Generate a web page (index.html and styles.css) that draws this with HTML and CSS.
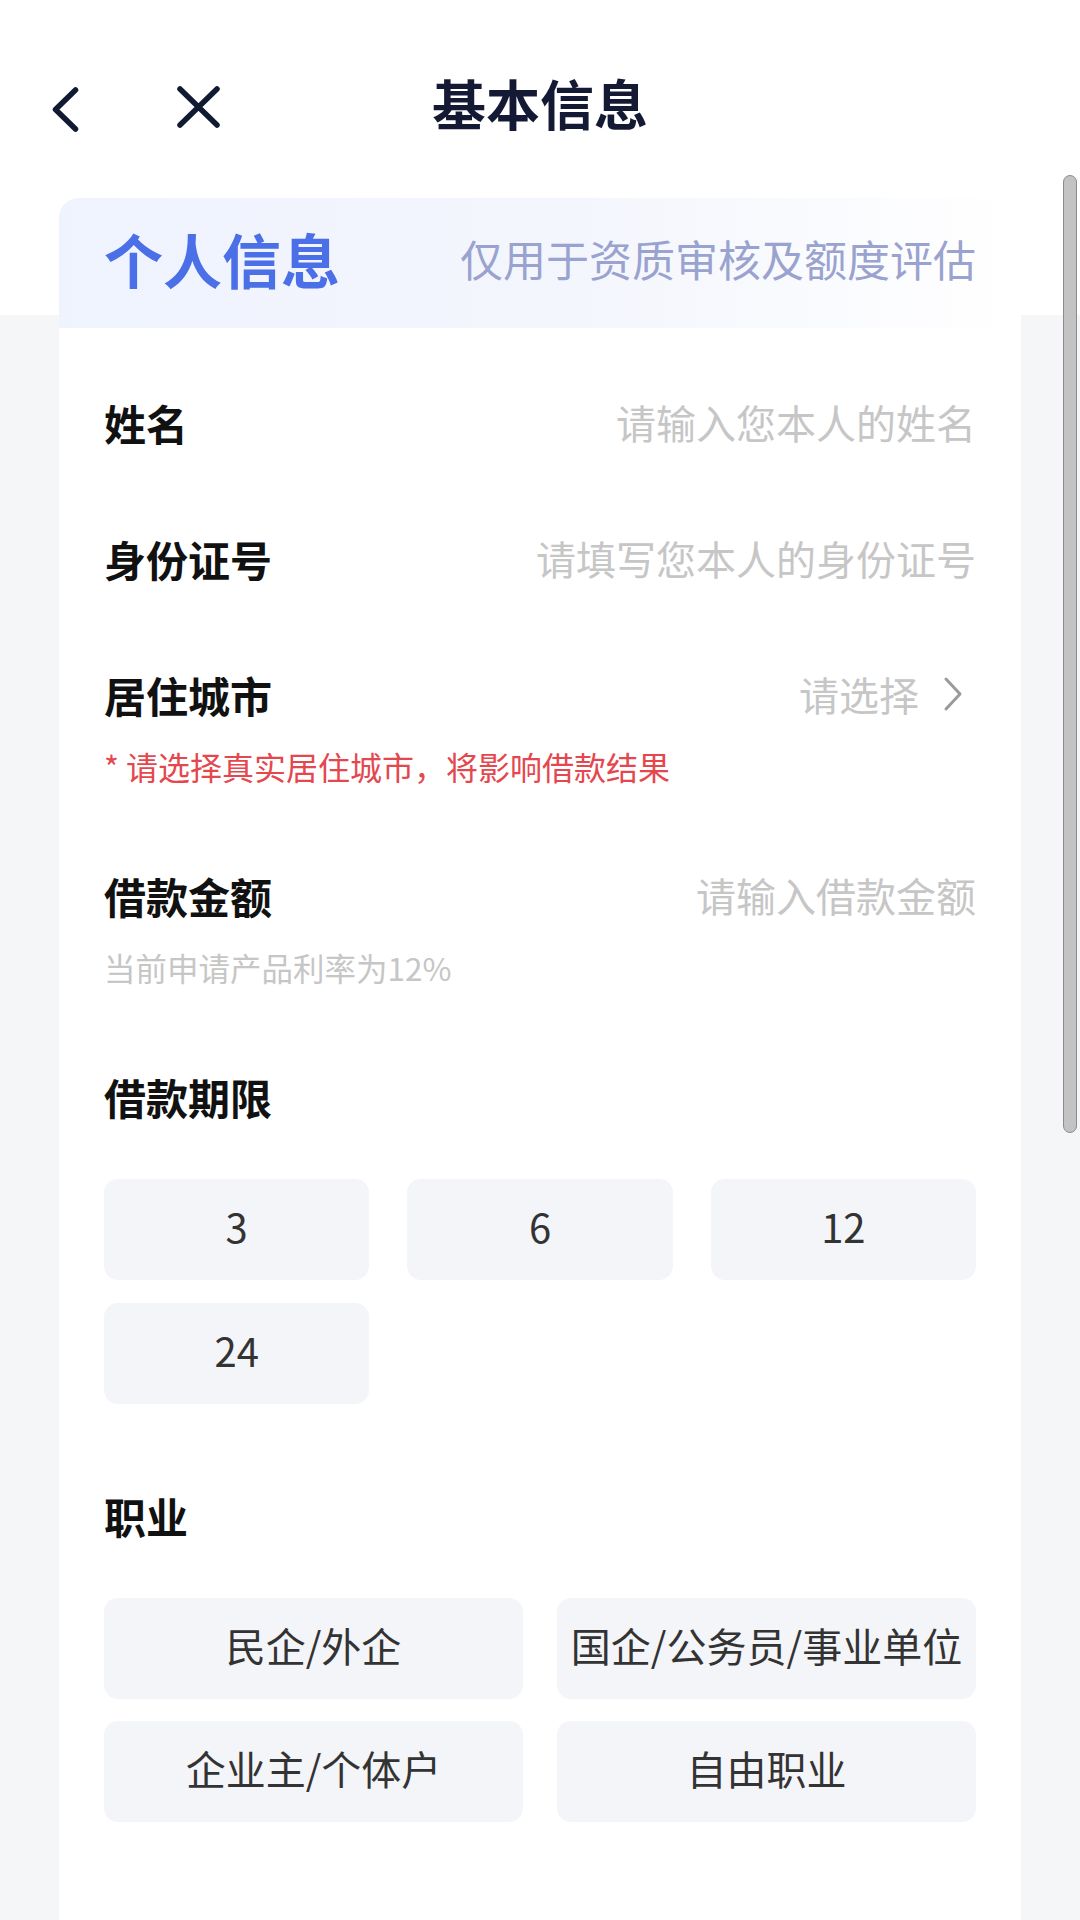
FILE: index.html
```html
<!DOCTYPE html>
<html lang="zh-CN">
<head>
    <meta charset="UTF-8">
    <meta name="viewport" content="width=device-width, initial-scale=1.0">
    <title>基本信息</title>
    <link rel="stylesheet" href="styles.css">
</head>
<body>
<div class="page">

    <header class="nav">
        <div class="nav-left">
            <svg class="icon-back" width="40" height="56" viewBox="0 0 40 56">
                <path d="M30.5 11 L10.5 30.5 L30.5 50" />
            </svg>
            <svg class="icon-close" width="56" height="56" viewBox="0 0 56 56">
                <path d="M10 10 L47 46 M47 10 L10 46" />
            </svg>
        </div>
        <h1 class="nav-title">基本信息</h1>
        <div></div>
    </header>

    <section class="card">
        <div class="card-head">
            <h2>个人信息</h2>
            <span class="card-tip">仅用于资质审核及额度评估</span>
        </div>

        <div class="card-body">
            <div class="field">
                <span class="label">姓名</span>
                <span class="placeholder">请输入您本人的姓名</span>
            </div>

            <div class="field">
                <span class="label">身份证号</span>
                <span class="placeholder">请填写您本人的身份证号</span>
            </div>

            <div class="field field-select">
                <span class="label">居住城市</span>
                <span class="placeholder">请选择
                    <svg class="icon-more" width="24" height="38" viewBox="0 0 24 38">
                        <path d="M5 4 L19 19 L5 34" />
                    </svg>
                </span>
            </div>
            <p class="note note-warn">* 请选择真实居住城市，将影响借款结果</p>

            <div class="field">
                <span class="label">借款金额</span>
                <span class="placeholder">请输入借款金额</span>
            </div>
            <p class="note">当前申请产品利率为12%</p>

            <div class="field">
                <span class="label">借款期限</span>
            </div>
            <div class="options options-3">
                <div class="option">3</div>
                <div class="option">6</div>
                <div class="option">12</div>
                <div class="option">24</div>
            </div>

            <div class="field">
                <span class="label">职业</span>
            </div>
            <div class="options options-2">
                <div class="option">民企/外企</div>
                <div class="option">国企/公务员/事业单位</div>
                <div class="option">企业主/个体户</div>
                <div class="option">自由职业</div>
            </div>
        </div>
    </section>

    <div class="scrollbar"></div>
</div>
</body>
</html>
```

FILE: styles.css
```css
* {
    box-sizing: border-box;
}

body {
    margin: 0;
    font-family: "Noto Sans CJK SC", "Noto Sans", sans-serif;
    color: #111;
}

.page {
    position: relative;
    width: 1080px;
    height: 1920px;
    overflow: hidden;
    background: linear-gradient(to bottom, #fff 315px, #f5f6f8 315px);
}

/* top navigation */
.nav {
    display: grid;
    grid-template-columns: 1fr auto 1fr;
    align-items: center;
    height: 60px;
    margin-top: 73px;
}

.nav-left {
    display: flex;
    align-items: center;
    gap: 85px;
    padding-left: 45px;
}

.nav-left svg path {
    fill: none;
    stroke: #111a33;
    stroke-width: 5.5;
    stroke-linecap: round;
    stroke-linejoin: round;
}

.nav-title {
    margin: 0 0 8px;
    font-size: 54px;
    font-weight: 700;
    line-height: 60px;
    color: #141a34;
}

/* card */
.card {
    margin: 65px 59px 0;
    height: 1800px;
    background: #fff;
    border-radius: 20px 20px 0 0;
}

.card-head {
    display: flex;
    justify-content: space-between;
    align-items: center;
    height: 130px;
    padding: 0 45px 10px;
    border-radius: 20px 20px 0 0;
    background: linear-gradient(90deg, #eff3fe 0%, #f4f6fd 55%, #fff 100%);
}

.card-head h2 {
    margin: 0;
    font-size: 59px;
    font-weight: 700;
    color: #4a6fe6;
}

.card-tip {
    font-size: 43px;
    color: #9aa3cf;
}

.card-body {
    padding: 68px 45px 0;
}

.field {
    display: flex;
    justify-content: space-between;
    align-items: center;
    height: 60px;
    padding-bottom: 8px;
    margin-bottom: 76px;
}

.label {
    font-size: 42px;
    font-weight: 700;
    color: #111;
}

.placeholder {
    display: flex;
    align-items: center;
    font-size: 40px;
    color: #c6c6c6;
}

.field-select .placeholder {
    padding-right: 11px;
}

.icon-more {
    margin-left: 22px;
}

.icon-more path {
    fill: none;
    stroke: #9a9a9a;
    stroke-width: 3;
    stroke-linecap: round;
    stroke-linejoin: round;
}

.field-select,
.field:has(+ .note) {
    margin-bottom: 18px;
}

.note {
    margin: 0 0 83px;
    font-size: 31.5px;
    line-height: 40px;
    color: #c6c6c6;
}

.note-warn {
    font-size: 32px;
    color: #e5474e;
}

.field:has(+ .options) {
    margin-bottom: 49px;
}

/* option chips */
.options {
    display: grid;
    margin-bottom: 85px;
}

.options-3 {
    grid-template-columns: repeat(3, 1fr);
    gap: 23px 38px;
}

.options-2 {
    grid-template-columns: repeat(2, 1fr);
    gap: 22px 34px;
}

.option {
    display: flex;
    justify-content: center;
    align-items: center;
    height: 101px;
    padding-bottom: 8px;
    border-radius: 14px;
    background: #f4f5f9;
    font-size: 40px;
    color: #333;
    white-space: nowrap;
}

/* overlay scroll thumb */
.scrollbar {
    position: absolute;
    top: 175px;
    left: 1063px;
    width: 14px;
    height: 958px;
    border-radius: 7px;
    background: #c3c3c3;
    border: 1.5px solid #8c8c8c;
}
```
